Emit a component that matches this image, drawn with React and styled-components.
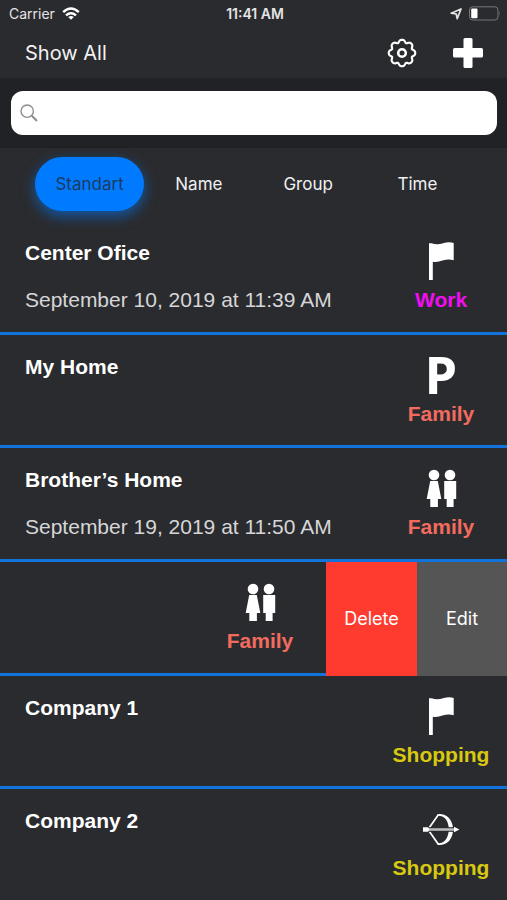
import React from "react"
import { useState } from "react";
import styled, { createGlobalStyle } from "styled-components";

const GlobalStyle = createGlobalStyle`
  * {
    box-sizing: border-box;
  }
  body {
    margin: 0;
    background: #2a2b2e;
  }
  button, input {
    font-family: inherit;
    border: none;
    padding: 0;
    margin: 0;
  }
`

const Page = styled.div`
  display: flex;
  flex-direction: column;
  min-height: 100vh;
  background: #2a2b2e;
  color: #fff;
  font-family: Inter, "Liberation Sans", sans-serif;
`

const StatusBar = styled.div`
  display: grid;
  grid-template-columns: 1fr auto 1fr;
  align-items: center;
  height: 27px;
  padding: 0 6px 0 9px;
  font-size: 14px;
  color: #e4e4e6;
`

const StatusGroup = styled.div`
  display: flex;
  align-items: center;
  justify-content: ${props => props.$end ? 'flex-end' : 'flex-start'};
  gap: 7px;
`

const Clock = styled.div`
  font-weight: 600;
`

const NavBar = styled.header`
  display: flex;
  align-items: center;
  gap: 36px;
  height: 51px;
  padding: 0 24px 0 25px;
`

const ShowAll = styled.button`
  margin-right: auto;
  background: none;
  color: #f2f2f4;
  font-size: 20px;
`

const IconButton = styled.button`
  display: flex;
  background: none;
  color: #fff;
`

const SearchBar = styled.div`
  padding: 13px 10px 13px 11px;
  background: #212225;
`

const SearchField = styled.label`
  display: flex;
  align-items: center;
  gap: 8px;
  height: 44px;
  padding: 0 9px;
  border-radius: 12px;
  background: #fff;
`

const SearchInput = styled.input`
  flex: 1;
  min-width: 0;
  height: 32px;
  background: none;
  outline: none;
  color: #222;
  font-size: 17px;
`

const SortTabs = styled.div`
  display: grid;
  grid-template-columns: repeat(4, 1fr);
  padding: 9px 35px 10px;
`

const SortTab = styled.button`
  height: 54px;
  border-radius: 27px;
  background: ${props => props.$active ? '#007aff' : 'none'};
  box-shadow: ${props => props.$active ? '0 5px 14px rgba(0, 122, 255, 0.6)' : 'none'};
  color: ${props => props.$active ? '#1c3a63' : '#f0f0f2'};
  font-size: 17px;
`

const List = styled.ul`
  display: flex;
  flex-direction: column;
  flex: 1;
  margin: 0;
  padding: 0;
  list-style: none;
  font-family: "Liberation Sans", Arial, sans-serif;
`

const Row = styled.li`
  display: flex;
  flex: 1 1 3px;
  justify-content: flex-end;
  overflow: hidden;

  &:last-child {
    flex-basis: 0;
  }
`

const Place = styled.div`
  display: flex;
  flex: 0 0 100%;
  justify-content: space-between;
  border-bottom: 3px solid #1273dc;

  ${Row}:last-child & {
    border-bottom: none;
  }
`

const PlaceText = styled.div`
  display: flex;
  flex-direction: column;
  gap: 19px;
  padding: 18px 0 0 25px;
  line-height: 28px;
`

const PlaceName = styled.div`
  font-size: 21px;
  font-weight: bold;
`

const PlaceDate = styled.div`
  color: #d6d6d8;
  font-size: 21px;
`

const Category = styled.div`
  display: flex;
  flex-direction: column;
  align-items: center;
  gap: 6px;
  width: 132px;
  padding-top: 21px;
`

const CategoryName = styled.div`
  color: ${props => props.$color};
  font-size: 21px;
  font-weight: bold;
  line-height: 28px;
`

const ParkingSign = styled.span`
  height: 38px;
  font-family: "Noto Sans", sans-serif;
  font-size: 52px;
  font-weight: 700;
  line-height: 36px;
`

const ActionButton = styled.button`
  flex: 0 0 ${props => props.$width}px;
  background: ${props => props.$color};
  color: #fff;
  font-family: Inter, sans-serif;
  font-size: 18px;
`

const WifiIcon = () => (
  <svg width="18" height="14" viewBox="0 0 18 14" fill="none" stroke="#fff" strokeWidth="2.4">
    <path d="M1.2 5.2Q9 -2 16.8 5.2" />
    <path d="M4 8.3Q9 4 14 8.3" />
    <path d="M9 12.8L6.2 10Q9 8 11.8 10Z" fill="#fff" stroke="none" />
  </svg>
)

const LocationIcon = () => (
  <svg width="12" height="12" viewBox="0 0 12 12" fill="none" stroke="#e4e4e6" strokeWidth="1.7" strokeLinejoin="round">
    <path d="M11 1L7.2 10.6L6.2 6L1.2 5.2Z" />
  </svg>
)

const BatteryIcon = () => (
  <svg width="32" height="15" viewBox="0 0 32 15">
    <rect x="0.5" y="0.8" width="28.5" height="13.2" rx="3.2" fill="none" stroke="#77787b" />
    <rect x="2.2" y="2.6" width="6.3" height="9.6" rx="1" fill="#fff" />
    <path d="M30.3 5.3Q32 7.4 30.3 9.6Z" fill="#77787b" />
  </svg>
)

// eight soft teeth around the centre
const gearPoints = Array.from({ length: 96 }, (_, i) => {
  const angle = (i / 96) * Math.PI * 2
  const wave = Math.cos(angle * 8)
  const radius = 12.2 + 1.3 * wave - 0.25 * Math.cos(angle * 16)
  return `${(15 + radius * Math.cos(angle)).toFixed(2)},${(15 + radius * Math.sin(angle)).toFixed(2)}`
}).join(' ')

const GearIcon = () => (
  <svg width="30" height="30" viewBox="0 0 30 30" fill="none" stroke="currentColor" strokeWidth="2.1" strokeLinejoin="round">
    <polygon points={gearPoints} />
    <circle cx="15" cy="15" r="3.8" strokeWidth="2.6" />
  </svg>
)

const PlusIcon = () => (
  <svg width="30" height="30" viewBox="0 0 30 30" fill="currentColor">
    <rect x="10.5" y="0" width="9" height="30" rx="1.5" />
    <rect x="0" y="10" width="30" height="9.5" rx="1.5" />
  </svg>
)

const SearchIcon = () => (
  <svg width="18" height="18" viewBox="0 0 18 18" fill="none" stroke="#8e8e93">
    <circle cx="7.2" cy="7.2" r="6.2" strokeWidth="1.4" />
    <path d="M11.8 11.8L17 17" strokeWidth="2.1" />
  </svg>
)

const FlagIcon = () => (
  <svg width="38" height="38" viewBox="0 0 38 38" fill="#fff">
    <path d="M7 1.2H9.5Q15 3.3 21 1.3Q27 -0.5 31.7 1V18.2Q26 16.8 20.5 18.6Q15.5 20.4 10.8 19.7V38H7Z" />
  </svg>
)

const FamilyIcon = () => (
  <svg width="38" height="38" viewBox="0 0 38 38" fill="#fff">
    <circle cx="12" cy="6" r="5.3" />
    <path d="M8.2 12H15.8L19.3 30H15.9V38H8.3V30H4.7Z" />
    <circle cx="28" cy="6" r="5.3" />
    <path d="M22.2 12H34.2V30H31.6V38H24.7V30H22.2Z" />
  </svg>
)

const BowIcon = () => (
  <svg width="38" height="38" viewBox="0 0 38 38" fill="none" stroke="#fff">
    <path d="M16.5 4.5L6 19.5L16.5 34.5" strokeWidth="1.7" />
    <path d="M15.5 4.3Q18 3.3 22 4.7C34 9 34 30 22 34.3Q18 35.7 15.5 34.7L16.5 33.2Q20 33.3 22 31.4C28.4 27 28.4 12 22 7.6Q20 5.8 16.5 5.8Z" fill="#fff" stroke="none" />
    <path d="M4 19.5H34" stroke="#2a2b2e" strokeWidth="4.6" />
    <path d="M4 19.5H34" stroke="#b9babc" strokeWidth="2.6" />
    <path d="M1 17.3H6L7.5 19.5L6 21.7H1ZM32 16.8L37.5 19.5L32 22.2Z" fill="#fff" stroke="none" />
  </svg>
)

const icons = {
  flag: <FlagIcon />,
  parking: <ParkingSign>P</ParkingSign>,
  family: <FamilyIcon />,
  bow: <BowIcon />,
}

const colors = {
  Work: '#f10df1',
  Family: '#f26b5e',
  Shopping: '#d8c910',
}

const places = [
  { id: 1, name: 'Center Ofice', date: 'September 10, 2019 at 11:39 AM', icon: 'flag', group: 'Work' },
  { id: 2, name: 'My Home', icon: 'parking', group: 'Family' },
  { id: 3, name: 'Brother’s Home', date: 'September 19, 2019 at 11:50 AM', icon: 'family', group: 'Family' },
  { id: 4, icon: 'family', group: 'Family', swiped: true },
  { id: 5, name: 'Company 1', icon: 'flag', group: 'Shopping' },
  { id: 6, name: 'Company 2', icon: 'bow', group: 'Shopping' },
]

const sorts = ['Standart', 'Name', 'Group', 'Time']

function App() {
  const [sort, setSort] = useState('Standart');
  const [search, setSearch] = useState('');

  return (
    <Page>
      <GlobalStyle />
      <StatusBar>
        <StatusGroup>
          Carrier
          <WifiIcon />
        </StatusGroup>
        <Clock>11:41 AM</Clock>
        <StatusGroup $end>
          <LocationIcon />
          <BatteryIcon />
        </StatusGroup>
      </StatusBar>
      <NavBar>
        <ShowAll>Show All</ShowAll>
        <IconButton aria-label="Settings"><GearIcon /></IconButton>
        <IconButton aria-label="Add"><PlusIcon /></IconButton>
      </NavBar>
      <SearchBar>
        <SearchField>
          <SearchIcon />
          <SearchInput
            type="text"
            aria-label="Search"
            value={search}
            onChange={(e) => setSearch(e.target.value)}
          />
        </SearchField>
      </SearchBar>
      <SortTabs>
        {sorts.map((name) => (
          <SortTab key={name} $active={sort === name} onClick={() => setSort(name)}>
            {name}
          </SortTab>
        ))}
      </SortTabs>
      <List>
        {places.map((place) => (
          <Row key={place.id}>
            <Place>
              <PlaceText>
                {place.name && <PlaceName>{place.name}</PlaceName>}
                {place.date && <PlaceDate>{place.date}</PlaceDate>}
              </PlaceText>
              <Category>
                {icons[place.icon]}
                <CategoryName $color={colors[place.group]}>{place.group}</CategoryName>
              </Category>
            </Place>
            {place.swiped && (
              <>
                <ActionButton $width={91} $color="#ff3b30">Delete</ActionButton>
                <ActionButton $width={90} $color="#555556">Edit</ActionButton>
              </>
            )}
          </Row>
        ))}
      </List>
    </Page>
  )
}

export default App;
